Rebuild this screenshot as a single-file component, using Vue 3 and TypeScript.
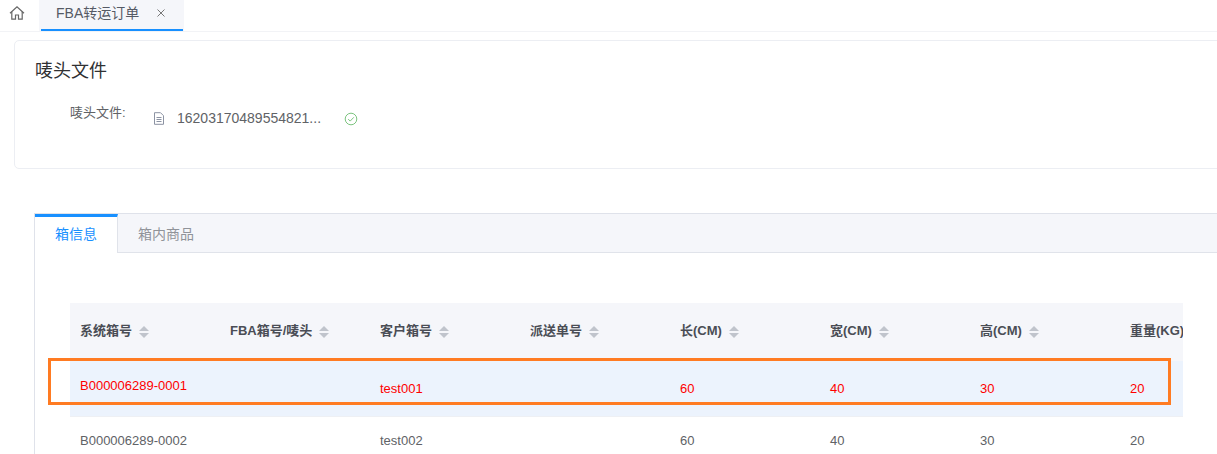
<script setup lang="ts">
const columns = ['系统箱号', 'FBA箱号/唛头', '客户箱号', '派送单号', '长(CM)', '宽(CM)', '高(CM)', '重量(KG)']
const rows = [
  { cells: ['B000006289-0001', '', 'test001', '', '60', '40', '30', '20'], active: true },
  { cells: ['B000006289-0002', '', 'test002', '', '60', '40', '30', '20'], active: false },
]
</script>

<template>
  <div class="page">
    <header class="topbar">
      <span class="home">
        <svg width="16" height="16" viewBox="0 0 16 16" fill="none" stroke="#666" stroke-width="1.2">
          <path d="M1 8.300 8 1.800l7 6.500" />
          <path d="M2.800 6.800v7.400h3.700V10h3v4.200h3.700V6.800" />
        </svg>
      </span>
      <div class="page-tab">
        <span>FBA转运订单</span>
        <svg class="close" width="10" height="10" viewBox="0 0 10 10" stroke="#777" stroke-width="1"><path d="M1.500 1.500l7 7M8.500 1.500l-7 7" /></svg>
      </div>
    </header>

    <section class="card">
      <h2>唛头文件</h2>
      <div class="file-row">
        <label>唛头文件:</label>
        <svg class="doc" width="12" height="13" viewBox="0 0 12 13" fill="none" stroke="#8c93a3" stroke-width="1">
          <path d="M1.500.7h6l3 3v8.600h-9z" />
          <path d="M3.500 5.500h5M3.500 7.500h5M3.500 9.500h5" />
        </svg>
        <span class="file-name">16203170489554821...</span>
        <svg class="ok" width="14" height="14" viewBox="0 0 14 14" fill="none" stroke="#7cc47f" stroke-width="1">
          <circle cx="7" cy="7" r="5.800" />
          <path d="M4.200 7.100l2 2 3.600-3.800" />
        </svg>
      </div>
    </section>

    <section class="tabs">
      <nav class="tab-head">
        <div class="tab active">箱信息</div>
        <div class="tab">箱内商品</div>
      </nav>
      <div class="tab-body">
        <div class="table">
          <div class="row head">
            <div v-for="c in columns" :key="c" class="cell">
              <span>{{ c }}</span>
              <span v-if="c !== '重量(KG)'" class="sort"><i class="up"></i><i class="down"></i></span>
            </div>
          </div>
          <div v-for="(r, ri) in rows" :key="ri" class="row body" :class="{ active: r.active }">
            <div v-for="(v, i) in r.cells" :key="i" class="cell" :class="{ first: i === 0 }">{{ v }}</div>
          </div>
          <div class="highlight"></div>
        </div>
      </div>
    </section>
  </div>
</template>

<style>
html, body { margin: 0; overflow: hidden; background: #fff; }
</style>

<style scoped>
.page {
  position: relative;
  width: 1217px;
  height: 454px;
  overflow: hidden;
  font-family: "Liberation Sans", "Noto Sans CJK SC", sans-serif;
  font-size: 13px;
  color: #606266;
}
.topbar {
  display: flex;
  height: 32px;
  box-sizing: border-box;
  border-bottom: 1px solid #f2f3f6;
}
.home { width: 39px; padding: 5px 0 0 9px; box-sizing: border-box; }
.page-tab {
  position: relative;
  display: flex;
  align-items: flex-start;
  box-sizing: border-box;
  width: 145px;
  height: 31px;
  padding: 4px 0 0 17px;
  background: #f5f6fa;
  font-size: 14px;
  line-height: 18px;
  color: #555a65;
}
.page-tab::after {
  content: "";
  position: absolute;
  left: 2px;
  right: 1px;
  bottom: 0;
  height: 2px;
  background: #1890ff;
}
.close { margin: 4px 0 0 17px; }
.card {
  box-sizing: border-box;
  height: 129px;
  margin: 8px -20px 0 14px;
  padding: 18px 20px;
  border: 1px solid #eceef3;
  border-radius: 5px;
}
h2 {
  margin: 0;
  font-size: 18px;
  font-weight: 400;
  line-height: 24px;
  color: #303133;
}
.file-row {
  display: flex;
  align-items: flex-start;
  margin: 22px 0 0 35px;
  height: 24px;
}
label { width: 83px; line-height: 16px; color: #606266; white-space: nowrap; }
.doc { margin: 7px 12px 0 0; }
.file-name { width: 167px; font-size: 14px; line-height: 24px; margin-top: 1px; color: #606266; }
.ok { margin-top: 7px; }
.tabs {
  margin: 44px -20px 0 34px;
  border: 1px solid #dfe2ea;
  border-right: 0;
  border-bottom: 0;
  height: 300px;
}
.tab-head {
  display: flex;
  height: 38px;
  background: #f5f6fa;
  border-bottom: 1px solid #e0e3ea;
}
.tab {
  box-sizing: border-box;
  height: 38px;
  padding: 3px 20px 0;
  line-height: 34px;
  font-size: 14px;
  color: #909399;
}
.tab.active {
  width: 83px;
  height: 39px;
  padding: 0;
  border-top: 3px solid #1890ff;
  border-right: 1px solid #e0e3ea;
  background: #fff;
  color: #1890ff;
  line-height: 35px;
  text-align: center;
}
.tab-body { padding: 50px 0 0 35px; }
.table { position: relative; width: 1113px; }
.row { display: flex; overflow: hidden; }
.cell {
  flex: 0 0 150px;
  box-sizing: border-box;
  padding-left: 10px;
  white-space: nowrap;
}
.head {
  height: 58px;
  background: #f5f6fa;
  font-weight: 700;
  color: #4a4d55;
  line-height: 56px;
}
.body { height: 56px; box-sizing: border-box; border-bottom: 1px solid #eef0f4; line-height: 48px; }
.body.active { background: #ecf3fd; color: #f00; line-height: 56px; }
.body.active .first { margin-top: -3px; }
.sort {
  display: inline-flex;
  flex-direction: column;
  gap: 2px;
  margin-left: 7px;
  vertical-align: -1px;
  transform: translateY(-5px);
}
.sort i { display: block; width: 0; height: 0; border-left: 5px solid transparent; border-right: 5px solid transparent; }
.sort .up { border-bottom: 5px solid #c0c4cc; }
.sort .down { border-top: 5px solid #c0c4cc; }
.highlight {
  position: absolute;
  left: -22px;
  top: 55px;
  width: 1117px;
  height: 41px;
  border: 3px solid #ff7b22;
  pointer-events: none;
}
</style>
